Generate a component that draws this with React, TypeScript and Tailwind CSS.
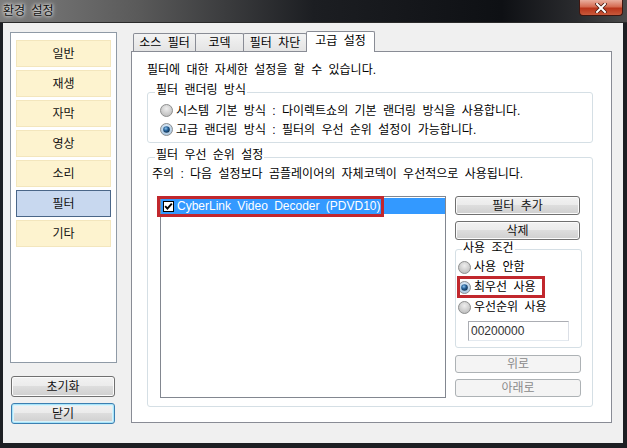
import React from "react";

const FONT = "font-['Liberation_Sans','Noto_Sans_CJK_KR',sans-serif]";

const STD_BTN =
  "flex items-center justify-center border border-[#707070] rounded-[3px] bg-[linear-gradient(180deg,#f2f2f2_0%,#ebebeb_49%,#dddddd_50%,#cfcfcf_100%)] shadow-[inset_0_0_0_1px_#fbfbfb] text-[#111]";
const DIS_BTN =
  "flex items-center justify-center border border-[#adb2b5] rounded-[3px] bg-[#f4f4f4] text-[#8a8a8a]";

function Radio({ checked, id }: { checked?: boolean; id: string }) {
  return (
    <svg width="13" height="13" viewBox="0 0 13 13" className="shrink-0">
      <defs>
        <radialGradient id={`rb-${id}`} cx="50%" cy="35%" r="70%">
          <stop offset="0" stopColor={checked ? "#e8f2fb" : "#eeeeee"} />
          <stop offset="1" stopColor={checked ? "#9fbfdc" : "#b8b8b8"} />
        </radialGradient>
        <radialGradient id={`rd-${id}`} cx="40%" cy="35%" r="75%">
          <stop offset="0" stopColor="#8cc4ee" />
          <stop offset="0.45" stopColor="#245f96" />
          <stop offset="1" stopColor="#0b2740" />
        </radialGradient>
      </defs>
      <circle cx="6.5" cy="6.5" r="6" fill={`url(#rb-${id})`} stroke="#8e8f8f" />
      {checked && <circle cx="6.5" cy="6.5" r="3.3" fill={`url(#rd-${id})`} />}
    </svg>
  );
}

function Check() {
  return (
    <svg width="11" height="11" viewBox="0 0 11 11" className="shrink-0">
      <rect x="0.5" y="0.5" width="10" height="10" fill="#fff" stroke="#000" />
      <path d="M2.2 5.2 L4.4 7.6 L8.8 2.6" fill="none" stroke="#000" strokeWidth="1.9" />
    </svg>
  );
}

function SideBtn({ label, active }: { label: string; active?: boolean }) {
  return (
    <div
      className={
        active
          ? "h-[27px] flex items-center justify-center border border-[#4a6688] bg-[#c8d8ef] text-[#111]"
          : "h-[27px] flex items-center justify-center border border-[#f3e6bd] bg-[#fdf3cf] text-[#111]"
      }
    >
      {label}
    </div>
  );
}

export default function App() {
  return (
    <div className={`w-[627px] h-[448px] flex flex-col bg-[#1d1f23] ${FONT} font-normal text-[12px] leading-[14px] [word-spacing:3px] text-black`}>
      {/* Title bar */}
      <div className="h-[23px] shrink-0 flex items-start justify-between border-b border-[#2a2a2a] bg-[linear-gradient(90deg,#7d7d7d_0%,#5a5a5a_22%,#1c1e22_50%,#0e1014_80%,#2a2b2e_92%,#4a4a4a_100%)]">
        <span className="ml-[3px] mt-[4px] text-[12px] leading-[14px] text-[#111] [text-shadow:0_0_5px_#ffffff,0_0_3px_#e8e8e8]">
          환경 설정
        </span>
        <div className="mr-[4px] w-[44px] h-[16px] rounded-b-[4px] border border-t-0 border-[#3f1610] bg-[linear-gradient(180deg,#e9ae9e_0%,#d56b52_45%,#b9341a_55%,#c9593b_100%)] flex items-center justify-center">
          <svg width="12" height="10" viewBox="0 0 12 10">
            <path d="M2 1 L10 9 M10 1 L2 9" stroke="#4a1a10" strokeWidth="3.6" strokeLinecap="square" />
            <path d="M2 1 L10 9 M10 1 L2 9" stroke="#ffffff" strokeWidth="2" strokeLinecap="square" />
          </svg>
        </div>
      </div>

      {/* Body */}
      <div className="flex-1 ml-[3px] mr-[4px] mb-[5px] bg-[#f0f0f0] flex">
        {/* Left column */}
        <div className="ml-[7px] w-[107px] pt-[9px] flex flex-col">
          <div className="h-[331px] border border-[#8f9aa6] bg-white pt-[7px] px-[5px] flex flex-col gap-[3px]">
            <SideBtn label="일반" />
            <SideBtn label="재생" />
            <SideBtn label="자막" />
            <SideBtn label="영상" />
            <SideBtn label="소리" />
            <SideBtn label="필터" active />
            <SideBtn label="기타" />
          </div>
          <div className={`mt-[13px] ml-[1px] w-[104px] h-[21px] ${STD_BTN}`}>초기화</div>
          <div className="mt-[6px] ml-[1px] w-[104px] h-[21px] flex items-center justify-center border border-[#3c7fb1] rounded-[3px] bg-[linear-gradient(180deg,#f2f2f2_0%,#ebebeb_49%,#dddddd_50%,#cfcfcf_100%)] shadow-[inset_0_0_0_1px_#a8e4f9,inset_0_0_0_2px_#d8f2fb] text-[#111]">
            닫기
          </div>
        </div>

        {/* Right column: tabs */}
        <div className="ml-[14px] w-[481px] pt-[8px] flex flex-col">
          <div className="h-[20px] flex items-end">
            <div className="ml-[2px] w-[63px] h-[18px] flex items-center justify-center border border-b-0 border-[#898c95] rounded-t-[2px] bg-[linear-gradient(180deg,#f3f3f3_0%,#e4e4e4_100%)]">
              소스 필터
            </div>
            <div className="-ml-px w-[49px] h-[18px] flex items-center justify-center border border-b-0 border-[#898c95] rounded-t-[2px] bg-[linear-gradient(180deg,#f3f3f3_0%,#e4e4e4_100%)]">
              코덱
            </div>
            <div className="-ml-px w-[64px] h-[18px] flex items-center justify-center border border-b-0 border-[#898c95] rounded-t-[2px] bg-[linear-gradient(180deg,#f3f3f3_0%,#e4e4e4_100%)]">
              필터 차단
            </div>
            <div className="relative z-10 -ml-px mb-[-1px] w-[69px] h-[21px] pb-[2px] flex items-center justify-center border border-b-0 border-[#898c95] rounded-t-[2px] bg-white">
              고급 설정
            </div>
          </div>

          <div className="h-[372px] border border-[#898c95] bg-white pl-[15px] pr-[18px] pt-[11px]">
            <div>필터에 대한 자세한 설정을 할 수 있습니다.</div>

            {/* Group 1 */}
            <fieldset className="mt-[6px] border border-[#d5dfe5] rounded-[3px]">
              <legend className="ml-[7px] px-[1px] pb-[4px] leading-[14px]">필터 랜더링 방식</legend>
              <div className="pl-[12px] pb-[3px]">
                <div className="h-[19px] flex items-center gap-[3px]">
                  <Radio id="r1" />
                  <span>시스템 기본 방식 : 다이렉트쇼의 기본 랜더링 방식을 사용합니다.</span>
                </div>
                <div className="h-[19px] flex items-center gap-[3px]">
                  <Radio id="r2" checked />
                  <span>고급 랜더링 방식 : 필터의 우선 순위 설정이 가능합니다.</span>
                </div>
              </div>
            </fieldset>

            {/* Group 2 */}
            <fieldset className="mt-[5px] border border-[#d5dfe5] rounded-[3px]">
              <legend className="ml-[7px] px-[1px] pb-[4px] leading-[14px]">필터 우선 순위 설정</legend>
              <div className="pl-[4px] pr-[10px] pb-[8px]">
                <div className="mt-[1px]">주의 : 다음 설정보다 곰플레이어의 자체코덱이 우선적으로 사용됩니다.</div>
                <div className="mt-[15px] ml-[8px] flex">
                  {/* List */}
                  <div className="relative w-[286px] h-[202px] border border-[#828790] bg-white pt-[1px]">
                    <div className="h-[16px] bg-[#3399ff] flex items-center pl-[2px] gap-[3px] text-white">
                      <Check />
                      <span>CyberLink Video Decoder (PDVD10)</span>
                    </div>
                    <div className="absolute left-[-4px] top-[-1px] w-[227px] h-[21px] border-[3px] border-[#c1272d]" />
                  </div>

                  {/* Right controls */}
                  <div className="ml-[9px] w-[127px] flex flex-col">
                    <div className={`w-[125px] h-[19px] ${STD_BTN}`}>필터 추가</div>
                    <div className={`mt-[6px] w-[125px] h-[19px] ${STD_BTN}`}>삭제</div>

                    <fieldset className="mt-[1px] border border-[#d5dfe5] rounded-[3px]">
                      <legend className="ml-[6px] px-[1px] pb-[2px] leading-[14px]">사용 조건</legend>
                      <div className="pl-[2px] pb-[6px]">
                        <div className="h-[20px] flex items-center gap-[3px]">
                          <Radio id="r3" />
                          <span>사용 안함</span>
                        </div>
                        <div className="relative h-[20px] flex items-center gap-[3px]">
                          <Radio id="r4" checked />
                          <span>최우선 사용</span>
                          <div className="absolute left-[-1px] top-[-1px] w-[88px] h-[22px] border-[3px] border-[#c1272d]" />
                        </div>
                        <div className="h-[20px] flex items-center gap-[3px]">
                          <Radio id="r5" />
                          <span>우선순위 사용</span>
                        </div>
                        <div className="mt-[4px] ml-[10px] w-[101px] h-[20px] border border-[#abadb3] border-b-[#e3e9ef] border-r-[#dbdfe6] bg-white flex items-center pl-[2px] text-[#333]">
                          00200000
                        </div>
                      </div>
                    </fieldset>

                    <div className={`mt-[7px] w-[126px] h-[18px] ${DIS_BTN}`}>위로</div>
                    <div className={`mt-[6px] w-[126px] h-[18px] ${DIS_BTN}`}>아래로</div>
                  </div>
                </div>
              </div>
            </fieldset>
          </div>
        </div>
      </div>
    </div>
  );
}
